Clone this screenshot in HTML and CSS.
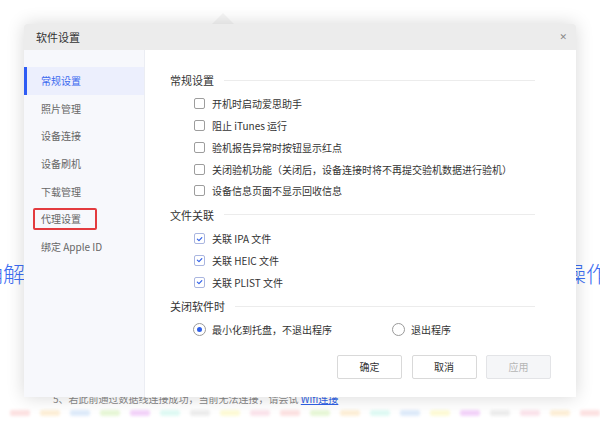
FILE: index.html
```html
<!DOCTYPE html>
<html lang="zh-CN">
<head>
<meta charset="utf-8">
<title>软件设置</title>
<link rel="stylesheet" href="styles.css">
</head>
<body>
<div class="page">
  <div class="hero">
    <span class="hero-left">确解锁机</span>
    <span class="hero-right">操作</span>
  </div>
  <div class="tip">5、若此前通过数据线连接成功，当前无法连接，请尝试 <span class="tip-link">Wifi连接</span></div>
  <div class="strip">
    <i class="c1"></i><i class="c2"></i><i class="c3"></i><i class="c4"></i><i class="c5"></i><i class="c6"></i><i class="c7"></i><i class="c8"></i><i class="c9"></i><i class="c1"></i><i class="c4"></i><i class="c2"></i><i class="c6"></i><i class="c3"></i><i class="c8"></i><i class="c5"></i><i class="c7"></i><i class="c9"></i><i class="c2"></i><i class="c1"></i>
  </div>
</div>

<div class="notch"></div>

<div class="dialog">
  <div class="dialog-head">
    <span class="dialog-title">软件设置</span>
    <span class="close">✕</span>
  </div>
  <div class="dialog-body">
    <ul class="side">
      <li class="side-item active">常规设置</li>
      <li class="side-item">照片管理</li>
      <li class="side-item">设备连接</li>
      <li class="side-item">设备刷机</li>
      <li class="side-item">下载管理</li>
      <li class="side-item marked">代理设置<span class="mark"></span></li>
      <li class="side-item">绑定 Apple ID</li>
    </ul>
    <div class="content">
      <div class="sec-title"><span>常规设置</span></div>
      <div class="row"><span class="cb"></span>开机时启动爱思助手</div>
      <div class="row"><span class="cb"></span>阻止 iTunes 运行</div>
      <div class="row"><span class="cb"></span>验机报告异常时按钮显示红点</div>
      <div class="row"><span class="cb"></span>关闭验机功能（关闭后，设备连接时将不再提交验机数据进行验机）</div>
      <div class="row"><span class="cb"></span>设备信息页面不显示回收信息</div>

      <div class="sec-title"><span>文件关联</span></div>
      <div class="row"><span class="cb on"><svg viewBox="0 0 10 10"><path d="M2.6 5.2 L4.4 6.8 L7.6 3.4" fill="none" stroke="#2f5fe8" stroke-width="1.3" stroke-linecap="round" stroke-linejoin="round"/></svg></span>关联 IPA 文件</div>
      <div class="row"><span class="cb on"><svg viewBox="0 0 10 10"><path d="M2.6 5.2 L4.4 6.8 L7.6 3.4" fill="none" stroke="#2f5fe8" stroke-width="1.3" stroke-linecap="round" stroke-linejoin="round"/></svg></span>关联 HEIC 文件</div>
      <div class="row"><span class="cb on"><svg viewBox="0 0 10 10"><path d="M2.6 5.2 L4.4 6.8 L7.6 3.4" fill="none" stroke="#2f5fe8" stroke-width="1.3" stroke-linecap="round" stroke-linejoin="round"/></svg></span>关联 PLIST 文件</div>

      <div class="sec-title"><span>关闭软件时</span></div>
      <div class="row radios">
        <span class="opt first"><span class="rd on"></span>最小化到托盘，不退出程序</span>
        <span class="opt"><span class="rd"></span>退出程序</span>
      </div>

      <div class="actions">
        <button class="btn">确定</button>
        <button class="btn">取消</button>
        <button class="btn disabled">应用</button>
      </div>
    </div>
  </div>
</div>
</body>
</html>
```
FILE: styles.css
```css
* { box-sizing: border-box; }
html, body { margin: 0; padding: 0; }
body {
  width: 600px;
  height: 422px;
  overflow: hidden;
  position: relative;
  background: #ffffff;
  font-family: "Noto Sans CJK SC", "Noto Sans", sans-serif;
  color: #333;
}

/* background page */
.page { padding-top: 259px; }
.hero {
  display: flex;
  justify-content: space-between;
  margin: 0 -8px 0 -19px;
  font-size: 22px;
  line-height: 26px;
  color: #3d6ef2;
  font-weight: 300;
}
.tip {
  margin-top: 107px;
  padding-left: 53px;
  font-size: 10px;
  line-height: 14px;
  color: #888;
}
.tip-link { color: #2f62e6; text-decoration: underline; }
.strip {
  display: flex;
  gap: 10px;
  margin: 4px 0 0 10px;
  filter: blur(1.5px);
  opacity: 0.18;
}
.strip i { display: block; width: 20px; height: 6px; border-radius: 2px; }
.c1 { background: #f05a5a; }
.c2 { background: #f5a623; }
.c3 { background: #4a90e2; }
.c4 { background: #7ed321; }
.c5 { background: #bd10e0; }
.c6 { background: #50e3c2; }
.c7 { background: #9b9b9b; }
.c8 { background: #f8e71c; }
.c9 { background: #e86a92; }

.notch {
  position: absolute;
  left: 212px;
  top: 13px;
  width: 0; height: 0;
  border-left: 11px solid transparent;
  border-right: 11px solid transparent;
  border-bottom: 11px solid #f5f5f5;
}

/* dialog */
.dialog {
  position: absolute;
  left: 24px;
  top: 24px;
  width: 552px;
  height: 373px;
  background: #fff;
  border-radius: 3px 3px 0 0;
  box-shadow: 0 0 18px rgba(0,0,0,0.16);
  display: flex;
  flex-direction: column;
  overflow: hidden;
}
.dialog-head {
  height: 26px;
  flex: none;
  background: #ececec;
  display: flex;
  align-items: center;
  justify-content: space-between;
  padding: 0 9px 0 12px;
}
.dialog-title { font-size: 11px; color: #333; }
.close { font-size: 9px; color: #888; font-weight: bold; font-family: "DejaVu Sans", sans-serif; }

.dialog-body { flex: 1; display: flex; }

.side {
  width: 121px;
  flex: none;
  margin: 0;
  padding: 17px 0 0;
  list-style: none;
  background: #f7f8fc;
  border-right: 1px solid #ebedf3;
}
.side-item {
  position: relative;
  height: 27.6px;
  display: flex;
  align-items: center;
  padding-left: 17px;
  font-size: 10px;
  color: #666;
}
.side-item.active {
  background: #eceffd;
  color: #3b69ef;
  border-left: 3px solid #2e5cf4;
  padding-left: 14px;
}
.mark {
  position: absolute;
  left: 9px;
  top: 3px;
  width: 64px;
  height: 22px;
  border: 2px solid #e33b3f;
  border-radius: 2px;
}

.content {
  flex: 1;
  padding: 17px 25px 0 25px;
}
.sec-title {
  height: 26px;
  display: flex;
  align-items: center;
  gap: 10px;
  margin-right: 16px;
  font-size: 11px;
  color: #333;
}
.sec-title::after {
  content: "";
  flex: 1;
  height: 1px;
  background: #ececec;
}
.row {
  height: 21.75px;
  display: flex;
  align-items: center;
  padding-left: 24px;
  font-size: 10px;
  color: #333;
}
.cb {
  width: 11px;
  height: 11px;
  border: 1px solid #9d9d9d;
  border-radius: 2px;
  margin-right: 7px;
  flex: none;
  display: flex;
  align-items: center;
  justify-content: center;
  background: #fff;
}
.cb.on { border-color: #aab6e0; }
.cb svg { width: 10px; height: 10px; display: block; }

.radios { padding-left: 23px; }
.opt { display: flex; align-items: center; }
.opt.first { width: 199px; }
.rd {
  width: 13px;
  height: 13px;
  border: 1px solid #9a9a9a;
  border-radius: 50%;
  margin-right: 6px;
  flex: none;
  display: flex;
  align-items: center;
  justify-content: center;
}
.rd.on::after {
  content: "";
  width: 5px;
  height: 5px;
  border-radius: 50%;
  background: #2f5fe8;
}

.actions {
  display: flex;
  justify-content: flex-end;
  gap: 9.5px;
  margin-top: 14px;
}
.btn {
  width: 65px;
  height: 24px;
  border: 1px solid #d9d9d9;
  border-radius: 2px;
  background: #fff;
  font-family: inherit;
  font-size: 10px;
  color: #333;
  padding: 0;
}
.btn.disabled {
  background: #f5f6f8;
  border-color: #e3e4e7;
  color: #b5b5b5;
}
```
